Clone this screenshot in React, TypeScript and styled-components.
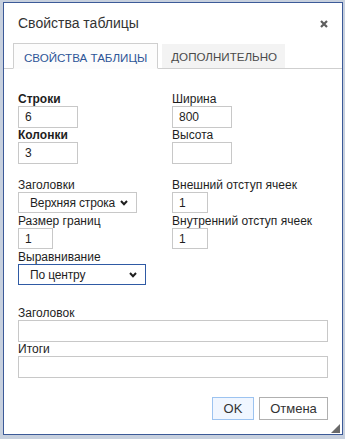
import React from "react";
import styled, { createGlobalStyle } from "styled-components";

const Global = createGlobalStyle`
  html, body { margin: 0; padding: 0; background: #c7d0de; }
  body { font-family: "Liberation Sans", Arial, sans-serif; }
  * { box-sizing: border-box; }
`;

const Page = styled.div`
  padding: 2px 2px 4px 3px;
  height: 439px;
`;

const Dialog = styled.div`
  position: relative;
  height: 433px;
  background: #fff;
  border: 1px solid #3c5a98;
  display: flex;
  flex-direction: column;
  color: #222;
  font-size: 12px;
`;

const Header = styled.div`
  height: 40px;
  display: flex;
  align-items: center;
  justify-content: space-between;
  padding: 0 14px 0 14px;
`;

const Title = styled.div`
  font-size: 14px;
  color: #333;
`;

const Close = styled.button`
  border: 0;
  background: none;
  padding: 0;
  width: 8px;
  height: 8px;
  display: flex;
  margin-top: 1px;
`;

const Tabs = styled.div`
  display: flex;
  gap: 4px;
  padding-left: 9px;
  height: 26px;
  border-bottom: 1px solid #cfcfcf;
  align-items: flex-end;
`;

const Tab = styled.div<{ $active?: boolean }>`
  height: ${(p) => (p.$active ? "26px" : "24px")};
  margin-bottom: ${(p) => (p.$active ? "-1px" : "0")};
  padding: ${(p) => (p.$active ? "0 10px 0 10px" : "0 8px 0 9px")};
  display: flex;
  align-items: center;
  padding-top: ${(p) => (p.$active ? "3px" : "1px")};
  font-size: 11.6px;
  text-transform: uppercase;
  color: ${(p) => (p.$active ? "#2d5597" : "#4a4a4a")};
  background: ${(p) => (p.$active ? "#fcfcfc" : "#f3f3f3")};
  border: ${(p) => (p.$active ? "1px solid #cfcfcf" : "none")};
  border-bottom: ${(p) => (p.$active ? "1px solid #fcfcfc" : "none")};
`;

const Body = styled.div`
  padding: 23px 14px 0 14px;
  display: flex;
  flex-direction: column;
  flex: 1;
`;

const Grid = styled.div`
  display: grid;
  grid-template-columns: 154px 1fr;
`;

const Column = styled.div`
  display: flex;
  flex-direction: column;
`;

const Group = styled.div<{ $gap?: number }>`
  display: flex;
  flex-direction: column;
  margin-top: ${(p) => p.$gap ?? 0}px;
`;

const Label = styled.div<{ $bold?: boolean }>`
  line-height: 14px;
  height: 14px;
  font-size: 12px;
  font-weight: ${(p) => (p.$bold ? 700 : 400)};
  color: #1e1e1e;
  white-space: nowrap;
`;

const Input = styled.div<{ $w?: number; $h?: number }>`
  width: ${(p) => (p.$w ? `${p.$w}px` : "100%")};
  height: ${(p) => p.$h ?? 22}px;
  border: 1px solid #c8c8c8;
  background: #fff;
  padding: 0 6px;
  display: flex;
  align-items: center;
  font-size: 12px;
  color: #1e1e1e;
`;

const Select = styled.div<{ $w: number; $focus?: boolean }>`
  width: ${(p) => p.$w}px;
  height: 21px;
  border: 1px solid ${(p) => (p.$focus ? "#2f5aa4" : "#c8c8c8")};
  background: #fff;
  padding: 0 8px 0 11px;
  display: flex;
  align-items: center;
  justify-content: space-between;
  font-size: 12px;
  letter-spacing: -0.15px;
  color: #1e1e1e;
  white-space: nowrap;
`;

const Footer = styled.div`
  display: flex;
  justify-content: flex-end;
  gap: 5px;
  padding-top: 19px;
`;

const Button = styled.button<{ $primary?: boolean; $w: number }>`
  width: ${(p) => p.$w}px;
  height: 23px;
  padding: 0;
  font-family: "Liberation Sans", Arial, sans-serif;
  font-size: 13px;
  color: #333;
  background: ${(p) => (p.$primary ? "#f0f6ff" : "#fff")};
  border: 1px solid ${(p) => (p.$primary ? "#9cc3f0" : "#b0b0b0")};
  border-radius: 0;
`;

const Grip = styled.div`
  position: absolute;
  right: 2px;
  bottom: 1px;
  width: 9px;
  height: 9px;
  display: flex;
`;

const Chevron = () => (
  <svg width="8" height="6" viewBox="0 0 8 6">
    <polyline points="1,1 4,4.2 7,1" fill="none" stroke="#1e1e1e" strokeWidth="2" />
  </svg>
);

export default function App() {
  return (
    <Page>
      <Global />
      <Dialog>
        <Header>
          <Title>Свойства таблицы</Title>
          <Close aria-label="close">
            <svg width="8" height="8" viewBox="0 0 8 8">
              <path d="M1 1L7 7M7 1L1 7" stroke="#5e5e5e" strokeWidth="2.2" />
            </svg>
          </Close>
        </Header>
        <Tabs>
          <Tab $active>Свойства таблицы</Tab>
          <Tab>Дополнительно</Tab>
        </Tabs>
        <Body>
          <Grid>
            <Column>
              <Label $bold>Строки</Label>
              <Input $w={60}>6</Input>
              <Label $bold>Колонки</Label>
              <Input $w={60}>3</Input>
            </Column>
            <Column>
              <Label>Ширина</Label>
              <Input $w={60}>800</Input>
              <Label>Высота</Label>
              <Input $w={60}></Input>
            </Column>
          </Grid>
          <Grid>
            <Column>
              <Group $gap={14}>
                <Label>Заголовки</Label>
                <Select $w={119}>
                  <span>Верхняя строка</span>
                  <Chevron />
                </Select>
              </Group>
              <Group $gap={1}>
                <Label>Размер границ</Label>
                <Input $w={35} $h={21}>1</Input>
              </Group>
              <Group $gap={1}>
                <Label>Выравнивание</Label>
                <Select $w={128} $focus>
                  <span>По центру</span>
                  <Chevron />
                </Select>
              </Group>
            </Column>
            <Column>
              <Group $gap={14}>
                <Label>Внешний отступ ячеек</Label>
                <Input $w={36} $h={21}>1</Input>
              </Group>
              <Group $gap={1}>
                <Label>Внутренний отступ ячеек</Label>
                <Input $w={36} $h={21}>1</Input>
              </Group>
            </Column>
          </Grid>
          <Group $gap={21}>
            <Label>Заголовок</Label>
            <Input></Input>
            <Label>Итоги</Label>
            <Input></Input>
          </Group>
          <Footer>
            <Button $primary $w={42}>OK</Button>
            <Button $w={69}>Отмена</Button>
          </Footer>
        </Body>
        <Grip>
          <svg width="9" height="9" viewBox="0 0 9 9">
            <polygon points="9,0 9,9 0,9" fill="#6a6a6a" />
          </svg>
        </Grip>
      </Dialog>
    </Page>
  );
}
